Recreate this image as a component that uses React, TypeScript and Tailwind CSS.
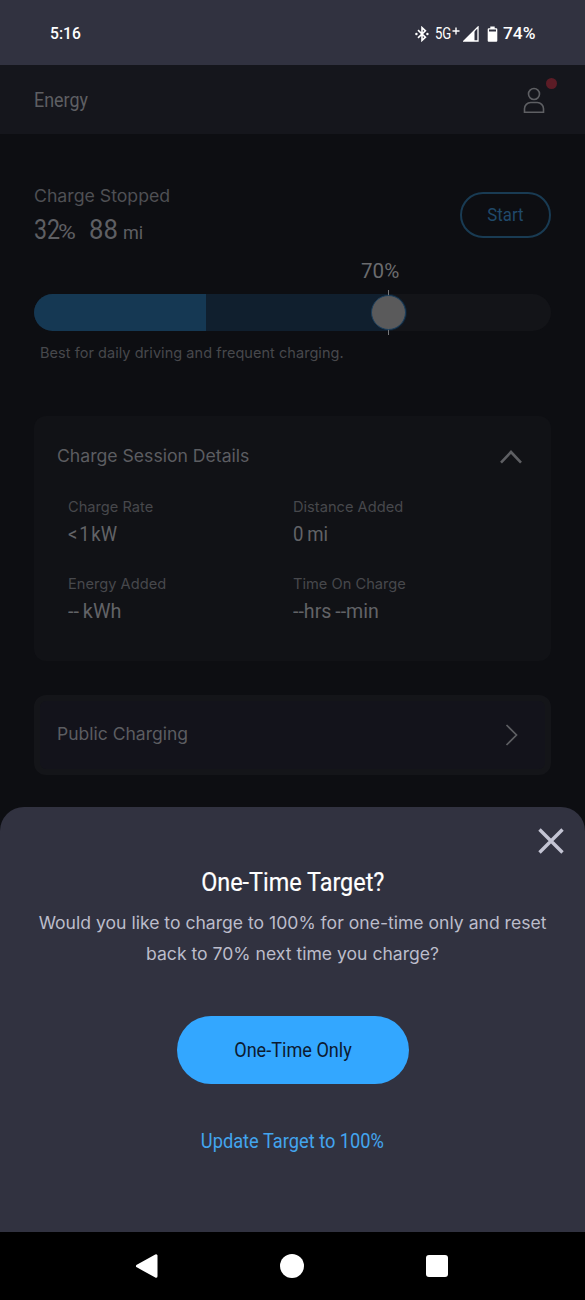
const details = [
  { label: 'Charge Rate', value: '< 1 kW', valueClass: 'scale-x-[0.92] [word-spacing:-3px]' },
  { label: 'Distance Added', value: '0 mi', valueClass: 'scale-x-[0.93] [word-spacing:-1px]' },
  { label: 'Energy Added', value: '-- kWh', valueClass: 'scale-x-[0.99] [word-spacing:-1px]' },
  { label: 'Time On Charge', value: '--hrs --min', valueClass: 'scale-x-[0.98] [word-spacing:-1px]' },
];

function StatusBar() {
  return (
    <div className="flex h-[65px] shrink-0 items-center justify-between bg-[#313240] pt-0.5 pl-[50px] pr-[50px] text-white">
      <span className="w-[30px] origin-left scale-x-[0.92] text-[17px] font-medium whitespace-nowrap">5:16</span>
      <div className="flex items-center">
        <svg width="14" height="16" viewBox="0 0 14 16" fill="none" stroke="currentColor" strokeWidth="1.6">
          <path d="M3 4.2l7.4 7L7 14.4V1.6l3.4 3.2-7.4 7" />
          <circle cx="1.4" cy="8" r="1.2" fill="currentColor" stroke="none" />
          <circle cx="12.4" cy="8" r="1.2" fill="currentColor" stroke="none" />
        </svg>
        <div className="ml-1.5 flex w-[26px] text-[16px] leading-5">
          <span className="w-[17px] origin-left scale-x-[0.82]">5G</span>
          <svg className="mt-[3px]" width="8" height="8" viewBox="0 0 8 8" stroke="currentColor" strokeWidth="1.4">
            <path d="M0.5 4h7M4 0.5v7" />
          </svg>
        </div>
        <svg className="ml-0.5" width="16" height="16" viewBox="0 0 16 16">
          <path d="M15 1v14H1z" fill="none" stroke="currentColor" strokeWidth="1.3" />
          <path d="M11.5 4.5V15H1z" fill="currentColor" />
        </svg>
        <svg className="ml-2" width="11" height="16" viewBox="0 0 11 16" fill="currentColor">
          <path d="M3.3 0.5h4.4v1.7H9.3a1 1 0 0 1 1 1V14.7a1 1 0 0 1-1 1H1.7a1 1 0 0 1-1-1V3.2a1 1 0 0 1 1-1h1.6z" />
          <path d="M2 3.5h7v2H2z" fill="#313240" />
        </svg>
        <span className="ml-[5px] w-8 origin-left scale-x-[1.02] text-[17px] font-medium">74%</span>
      </div>
    </div>
  );
}

function Header() {
  return (
    <div className="flex h-[69px] shrink-0 items-center justify-between bg-[#15161c] pl-[34px] pr-10">
      <span className="origin-left scale-x-[0.895] text-xl text-[#5e5f63]">Energy</span>
      <div className="relative">
        <svg width="22" height="28" viewBox="0 0 22 28" fill="none" stroke="#5e5f63" strokeWidth="1.6">
          <circle cx="11" cy="8" r="5.5" />
          <path d="M1.5 26.3v-3.6a6.2 6.2 0 0 1 6.2-6.2h6.6a6.2 6.2 0 0 1 6.2 6.2v3.6z" />
        </svg>
        <span className="absolute -top-2 -right-3 size-[11px] rounded-full bg-[#5c1c26]" />
      </div>
    </div>
  );
}

function ChargeBar() {
  return (
    <div className="relative mt-[11px] h-[37px]">
      <div className="flex h-full overflow-hidden rounded-full bg-[#131418]">
        <div className="w-[172px] bg-[#153853]" />
        <div className="w-[201px] rounded-r-full bg-[#101f2e]" />
      </div>
      <div className="absolute -top-1 left-[354px] h-[45px] w-px bg-[#77787b]" />
      <div className="absolute top-[1px] left-[337px] size-[35px] rounded-full border border-[#1a3e5c] bg-[#5a5a5b]" />
    </div>
  );
}

function SessionDetails() {
  return (
    <div className="mt-[51px] h-[245px] shrink-0 rounded-xl bg-[#111216] px-[23px] pt-[29px]">
      <div className="flex h-6 items-center justify-between pr-1.5">
        <span className="origin-left scale-x-[1.036] font-[Inter] text-[17px] text-[#5c5d61]">Charge Session Details</span>
        <svg width="22" height="14" viewBox="0 0 22 14" fill="none" stroke="#5e5f63" strokeWidth="2.6">
          <path d="M1 12.6L11 2l10 10.6" />
        </svg>
      </div>
      <div className="mt-[26px] grid grid-cols-[224.5px_1fr] gap-y-[23px] pl-[11px]">
        {details.map((d) => (
          <div key={d.label} className="flex flex-col items-start">
            <span className="origin-left scale-x-[1.01] font-[Inter] text-[14.5px] leading-6 text-[#47484c]">{d.label}</span>
            <span className={`origin-left text-xl leading-[30px] text-[#626367] ${d.valueClass}`}>{d.value}</span>
          </div>
        ))}
      </div>
    </div>
  );
}

function TargetSheet() {
  return (
    <div className="relative flex h-[425px] shrink-0 flex-col items-center rounded-t-[24px] bg-[#313240]">
      <svg className="absolute top-[21px] right-[21px]" width="26" height="26" viewBox="0 0 26 26" stroke="#c3c4d3" strokeWidth="3.4">
        <path d="M1.5 1.5l23 23M24.5 1.5l-23 23" />
      </svg>
      <h2 className="mt-[57px] scale-x-[0.9] text-[26px] leading-9 whitespace-nowrap text-white [-webkit-text-stroke:0.2px_white]">
        One-Time Target?
      </h2>
      <p className="mt-2 scale-x-[1.034] text-center font-[Inter] text-[17px] leading-[31px] whitespace-nowrap text-[#bcbdcb]">
        Would you like to charge to 100% for one-time only and reset
        <br />
        back to 70% next time you charge?
      </p>
      <button className="mt-[46px] h-[68px] w-[232px] rounded-full bg-[#33a7ff] text-xl text-[#0c1a30]">
        <span className="inline-block scale-x-[0.905]">One-Time Only</span>
      </button>
      <button className="mt-[42px] scale-x-[0.912] text-xl leading-[30px] text-[#43a5ee]">Update Target to 100%</button>
    </div>
  );
}

function NavBar() {
  return (
    <div className="flex h-[68px] shrink-0 items-center justify-between bg-black pl-[135px] pr-[137px]">
      <svg width="23" height="26" viewBox="0 0 23 26" fill="white" stroke="white" strokeWidth="3" strokeLinejoin="round">
        <path d="M21 2.7v20.6L2.5 13z" />
      </svg>
      <div className="ml-[-1px] size-6 rounded-full bg-white" />
      <div className="size-[22px] rounded-[3px] bg-white" />
    </div>
  );
}

export default function App() {
  return (
    <div className="flex h-[1300px] w-[585px] flex-col overflow-hidden bg-[#0d0e12] font-[Roboto,sans-serif]">
      <StatusBar />
      <Header />
      <div className="flex h-[673px] shrink-0 flex-col px-[34px] pt-[50px]">
        <div className="flex justify-between">
          <div className="text-[#5e5f63]">
            <div className="origin-left scale-x-[1.04] font-[Inter] text-[17px] leading-6 text-[#4f5054]">Charge Stopped</div>
            <div className="mt-1 flex h-9 items-baseline text-[27px] leading-9">
              <span className="w-[24px] origin-left scale-x-[0.86]">32</span>
              <span className="w-[31px] origin-left scale-x-[1.22] text-[20px]">%</span>
              <span className="w-[34px] origin-left scale-x-[0.95]">88</span>
              <span className="origin-left scale-x-[0.95] text-[19px]">mi</span>
            </div>
          </div>
          <button className="mt-2 h-[46px] w-[91px] rounded-full border-2 border-[#193b53] text-[19px] text-[#20496a]">
            <span className="inline-block scale-x-[0.885]">Start</span>
          </button>
        </div>
        <div className="mt-[11px] ml-[327px] h-6 origin-left scale-x-[1.03] text-xl leading-6 text-[#6a6b6e]">70%</div>
        <ChargeBar />
        <div className="mt-2.5 h-6 pl-1.5 font-[Inter] text-[14.5px] leading-6 tracking-[0.05px] text-[#47484c]">
          Best for daily driving and frequent charging.
        </div>
        <SessionDetails />
        <div className="mt-[34px] flex h-20 shrink-0 items-center justify-between rounded-xl border-[6px] border-[#141519] bg-[#13131b] pl-[17px] pr-[27px]">
          <span className="origin-left scale-x-[1.03] font-[Inter] text-[17px] text-[#5c5d61]">Public Charging</span>
          <svg width="13" height="22" viewBox="0 0 13 22" fill="none" stroke="#5e5f63" strokeWidth="1.7">
            <path d="M1.5 1l10 10-10 10" />
          </svg>
        </div>
      </div>
      <TargetSheet />
      <NavBar />
    </div>
  );
}
